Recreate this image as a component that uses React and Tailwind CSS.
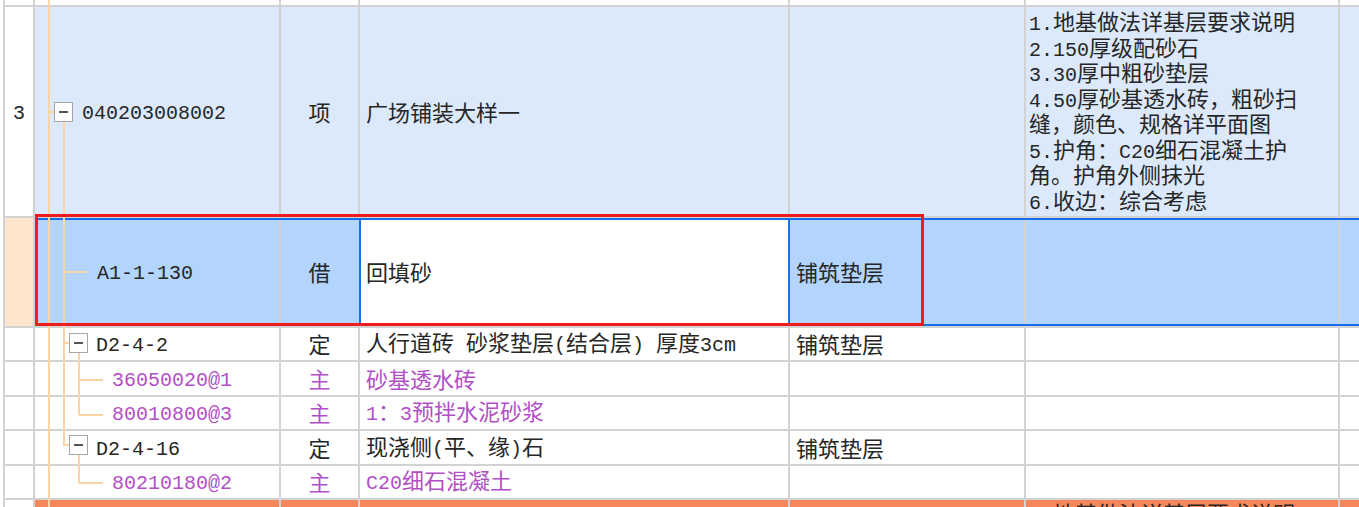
import React from "react"

// column widths include the 2px right grid line
const col = {
  no: "w-[30px] shrink-0 border-r-2 border-[#d2d2d2]",
  code: "w-[246px] shrink-0 border-r-2 border-[#d2d2d2]",
  type: "w-[79px] shrink-0 border-r-2 border-[#d2d2d2]",
  name: "w-[430px] shrink-0 border-r-2 border-[#d2d2d2]",
  work: "w-[236px] shrink-0 border-r-2 border-[#d2d2d2]",
  feat: "w-[314px] shrink-0 border-r-2 border-[#d2d2d2]",
  last: "flex-1",
}

// ascii runs get the narrow mono face, like the half-width glyphs in the grid
const Mixed = ({ text }) => (
  <span className="whitespace-nowrap">
    {text
      .split(/([\x20-\x7e]+)/)
      .filter(Boolean)
      .map((part, i) =>
        /^[\x20-\x7e]/.test(part) ? (
          <span key={i} className="whitespace-pre font-['Liberation_Mono',monospace] text-[20px]">
            {part}
          </span>
        ) : (
          <span key={i}>{part}</span>
        )
      )}
  </span>
)

const featureLines = [
  "1.地基做法详基层要求说明",
  "2.150厚级配砂石",
  "3.30厚中粗砂垫层",
  "4.50厚砂基透水砖，粗砂扫",
  "缝，颜色、规格详平面图",
  "5.护角：C20细石混凝土护",
  "角。护角外侧抹光",
  "6.收边：综合考虑",
]

const subRows = [
  { h: "h-[34px]", pad: "pl-[61px]", code: "D2-4-2", type: "定", name: "人行道砖 砂浆垫层(结合层) 厚度3cm", work: "铺筑垫层" },
  { h: "h-[35px]", pad: "pl-[77px]", code: "36050020@1", type: "主", name: "砂基透水砖", purple: true },
  { h: "h-[34px]", pad: "pl-[77px]", code: "80010800@3", type: "主", name: "1：3预拌水泥砂浆", purple: true },
  { h: "h-[35px]", pad: "pl-[61px]", code: "D2-4-16", type: "定", name: "现浇侧(平、缘)石", work: "铺筑垫层" },
  { h: "h-[34px]", pad: "pl-[77px]", code: "80210180@2", type: "主", name: "C20细石混凝土", purple: true },
]

const TreeLines = () => {
  const line = "#fcd3a4"
  const Minus = ({ x, y }) => (
    <g>
      <rect x={x + 0.5} y={y + 0.5} width="18" height="19" fill="#fff" stroke="#a6a6a6" />
      <rect x={x + 5} y={y + 9} width="9" height="2" fill="#555" />
    </g>
  )
  return (
    <svg className="pointer-events-none absolute left-0 top-0" width="1359" height="507">
      <g stroke={line} strokeWidth="2">
        <line x1="49" y1="0" x2="49" y2="507" />
        <line x1="49" y1="112" x2="54" y2="112" />
        <line x1="64" y1="122" x2="64" y2="446" />
        <line x1="64" y1="272" x2="88" y2="272" />
        <line x1="64" y1="343" x2="69" y2="343" />
        <line x1="64" y1="445" x2="69" y2="445" />
        <line x1="79" y1="353" x2="79" y2="415" />
        <line x1="79" y1="380" x2="103" y2="380" />
        <line x1="79" y1="415" x2="103" y2="415" />
        <line x1="79" y1="455" x2="79" y2="483" />
        <line x1="79" y1="483" x2="103" y2="483" />
      </g>
      <Minus x={54} y={102} />
      <Minus x={69} y={333} />
      <Minus x={69} y={435} />
    </svg>
  )
}

export default function App() {
  return (
    <div className="relative h-[507px] w-[1359px] overflow-hidden bg-white font-['Noto_Sans_CJK_SC',sans-serif] text-[22px] leading-[25.5px] text-[#262626]">
      <div className="pl-[3px]">
        <div className="border-l-2 border-[#d2d2d2]">
          {/* row above, mostly scrolled out */}
          <div className="flex h-[7px] border-b-2 border-[#d2d2d2]">
            <div className={col.no} />
            <div className={col.code} />
            <div className={col.type} />
            <div className={col.name} />
            <div className={col.work} />
            <div className={col.feat} />
            <div className={col.last} />
          </div>

          {/* list item 3 */}
          <div className="flex h-[211px] border-b-2 border-[#d2d2d2]">
            <div className={`${col.no} flex items-center justify-center`}>
              <Mixed text="3" />
            </div>
            <div className="flex flex-1 bg-[#dce9fb]">
              <div className={`${col.code} flex items-center pl-[47px]`}>
                <Mixed text="040203008002" />
              </div>
              <div className={`${col.type} flex items-center justify-center`}>项</div>
              <div className={`${col.name} flex items-center pl-[6px]`}>广场铺装大样一</div>
              <div className={col.work} />
              <div className={`${col.feat} pl-[3px] pt-[1px]`}>
                {featureLines.map((l) => (
                  <div key={l} className="h-[25.5px]">
                    <Mixed text={l} />
                  </div>
                ))}
              </div>
              <div className={col.last} />
            </div>
          </div>

          {/* selected quota row */}
          <div className="flex h-[110px] border-b-2 border-[#d2d2d2]">
            <div className={`${col.no} bg-[#fde6cb]`} />
            <div className="flex flex-1 border-y-2 border-[#1570f0] bg-[#b3d4fc]">
              <div className={`${col.code} flex items-center pl-[62px]`}>
                <Mixed text="A1-1-130" />
              </div>
              <div className="flex w-[78px] shrink-0 items-center justify-center pr-[1px]">借</div>
              <div className="flex w-[431px] shrink-0 items-center border-x-2 border-[#1570f0] bg-white pl-[5px]">
                回填砂
              </div>
              <div className={`${col.work} flex items-center pl-[6px]`}>铺筑垫层</div>
              <div className={col.feat} />
              <div className={col.last} />
            </div>
          </div>

          {subRows.map((r) => (
            <div key={r.code} className={`flex ${r.h} border-b-2 border-[#d2d2d2] ${r.purple ? "text-[#b24fc6]" : ""}`}>
              <div className={col.no} />
              <div className={`${col.code} flex items-center ${r.pad}`}>
                <Mixed text={r.code} />
              </div>
              <div className={`${col.type} flex items-center justify-center`}>{r.type}</div>
              <div className={`${col.name} flex items-center pl-[6px]`}>
                <Mixed text={r.name} />
              </div>
              <div className={`${col.work} flex items-center pl-[6px] text-[#262626]`}>{r.work}</div>
              <div className={col.feat} />
              <div className={col.last} />
            </div>
          ))}

          {/* next list item, cut off at the bottom */}
          <div className="flex h-[40px]">
            <div className={col.no} />
            <div className="flex flex-1 bg-[#f6875a]">
              <div className={col.code} />
              <div className={col.type} />
              <div className={col.name} />
              <div className={col.work} />
              <div className={`${col.feat} pl-[3px]`}>
                <Mixed text="1.地基做法详基层要求说明" />
              </div>
              <div className={col.last} />
            </div>
          </div>
        </div>
      </div>

      <TreeLines />

      {/* red highlight frame */}
      <div className="pointer-events-none absolute left-[35px] top-[214px] h-[112px] w-[889px] border-[3px] border-[#ee1c1c]" />
    </div>
  )
}
